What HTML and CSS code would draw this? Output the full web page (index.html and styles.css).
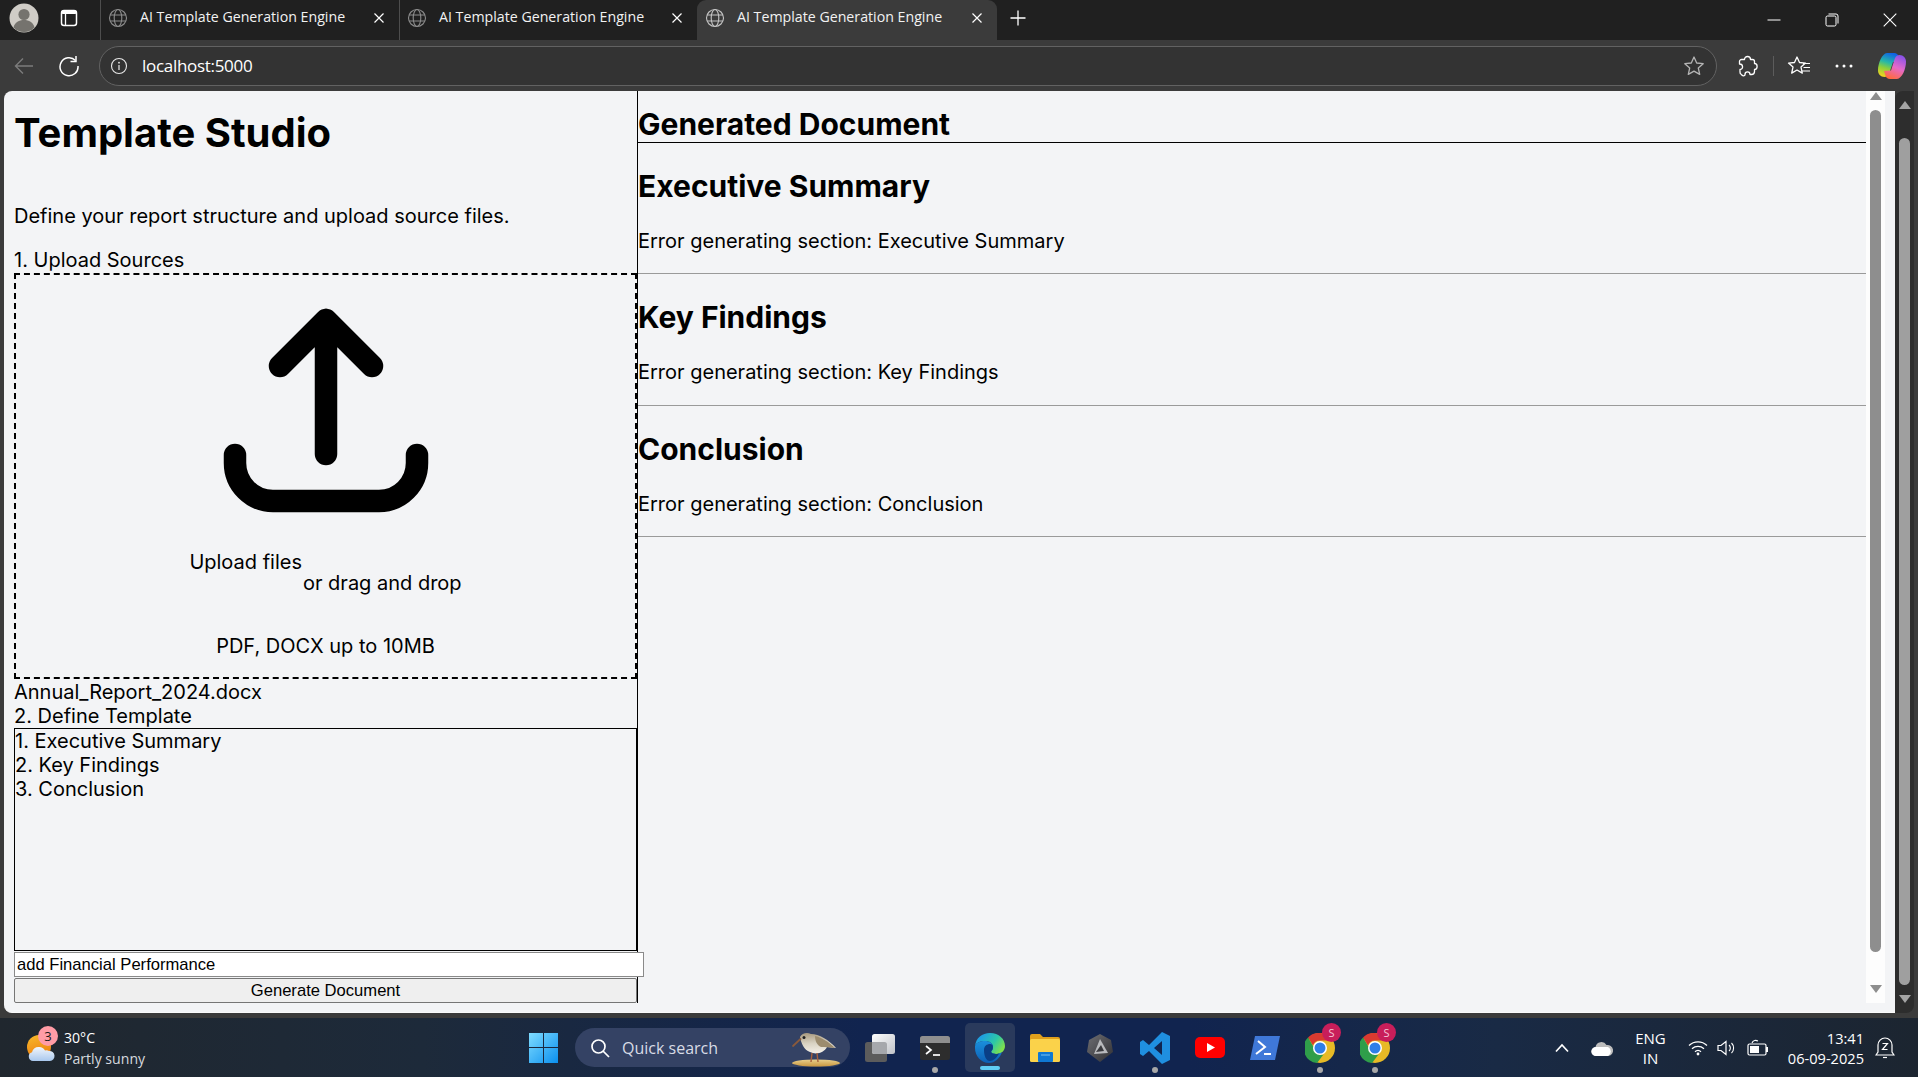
FILE: index.html
```html
<!DOCTYPE html>
<html lang="en">
<head>
<meta charset="utf-8">
<title>AI Template Generation Engine</title>
<link rel="stylesheet" href="styles.css">
</head>
<body>
<div class="screen">
  <header class="tabstrip">
    <span class="slot slot-first"><svg width="32" height="32" viewBox="0 0 32 32"><circle cx="16" cy="16" r="14.5" fill="#cfccc6"/><circle cx="16" cy="12.5" r="5.6" fill="#75736e"/><path d="M5.5 25.5c1.5-5.5 5.5-7.5 10.5-7.5s9 2 10.500 7.500A14.500 14.500 0 0 1 5.500 25.500z" fill="#75736e"/></svg></span>
    <span class="slot slot-second"><svg width="20" height="20" viewBox="0 0 20 20"><rect x="2.500" y="2.500" width="15" height="15" rx="2.500" fill="none" stroke="#fff" stroke-width="1.500"/><rect x="2.500" y="2.500" width="15" height="3.500" rx="1.500" fill="#fff"/><path d="M6.500 6v11" stroke="#fff" stroke-width="1.300"/></svg></span>
    <div class="tab">
      <svg class="globe" width="20" height="20" viewBox="0 0 20 20"><g fill="none" stroke="#8c8c8c" stroke-width="1.100"><circle cx="10" cy="10" r="8.500"/><ellipse cx="10" cy="10" rx="3.800" ry="8.500"/><path d="M2 7h16M2 13h16"/></g></svg>
      <span class="tab-title">AI Template Generation Engine</span>
      <svg class="tab-x" width="12" height="12" viewBox="0 0 12 12"><path d="M1.500 1.500l9 9m0-9l-9 9" stroke="#fff" stroke-width="1.200"/></svg>
    </div>
    <div class="tab tab-mid">
      <svg class="globe" width="20" height="20" viewBox="0 0 20 20"><g fill="none" stroke="#8c8c8c" stroke-width="1.100"><circle cx="10" cy="10" r="8.500"/><ellipse cx="10" cy="10" rx="3.800" ry="8.500"/><path d="M2 7h16M2 13h16"/></g></svg>
      <span class="tab-title">AI Template Generation Engine</span>
      <svg class="tab-x" width="12" height="12" viewBox="0 0 12 12"><path d="M1.500 1.500l9 9m0-9l-9 9" stroke="#fff" stroke-width="1.200"/></svg>
    </div>
    <div class="tab tab-active">
      <svg class="globe" width="20" height="20" viewBox="0 0 20 20"><g fill="none" stroke="#c4c4c4" stroke-width="1.100"><circle cx="10" cy="10" r="8.500"/><ellipse cx="10" cy="10" rx="3.800" ry="8.500"/><path d="M2 7h16M2 13h16"/></g></svg>
      <span class="tab-title">AI Template Generation Engine</span>
      <svg class="tab-x" width="12" height="12" viewBox="0 0 12 12"><path d="M1.500 1.500l9 9m0-9l-9 9" stroke="#fff" stroke-width="1.200"/></svg>
    </div>
    <span class="slot slot-plus"><svg width="18" height="18" viewBox="0 0 18 18"><path d="M9 1.500v15M1.500 9h15" stroke="#fff" stroke-width="1.300"/></svg></span>
    <div class="winctl">
      <span class="winbtn"><svg width="14" height="14" viewBox="0 0 14 14"><path d="M0.500 7h13" stroke="#fff" stroke-width="1"/></svg></span>
      <span class="winbtn"><svg width="14" height="14" viewBox="0 0 14 14"><rect x="1" y="3" width="10" height="10" rx="1.500" fill="none" stroke="#fff"/><path d="M3.500 1h7.500a2 2 0 0 1 2 2v7.500" fill="none" stroke="#fff"/></svg></span>
      <span class="winbtn winbtn-last"><svg width="14" height="14" viewBox="0 0 14 14"><path d="M0.700 0.700l12.600 12.600m0-12.600L0.700 13.300" stroke="#fff" stroke-width="1.100"/></svg></span>
    </div>
  </header>

  <nav class="toolbar">
    <span class="slot slot-first"><svg width="22" height="22" viewBox="0 0 22 22"><path d="M20 11H2.500M10 3.500L2.500 11l7.500 7.500" fill="none" stroke="#7c7c7c" stroke-width="1.400"/></svg></span>
    <span class="slot slot-second"><svg width="22" height="22" viewBox="0 0 22 22"><path d="M17.500 5.500A9 9 0 1 0 20 11" fill="none" stroke="#fff" stroke-width="1.500"/><path d="M18 1v5.500h-5.500" fill="none" stroke="#fff" stroke-width="1.500"/></svg></span>
    <div class="address">
      <svg class="addr-info" width="18" height="18" viewBox="0 0 18 18"><circle cx="9" cy="9" r="7.500" fill="none" stroke="#e8e8e8" stroke-width="1.100"/><path d="M9 8v5" stroke="#e8e8e8" stroke-width="1.200"/><circle cx="9" cy="5.700" r="0.900" fill="#e8e8e8"/></svg>
      <span class="addr-url">localhost:5000</span>
      <svg class="addr-star" width="22" height="22" viewBox="0 0 22 22"><path d="M11 2l2.700 6 6.500 0.700-4.900 4.300 1.400 6.400L11 16.100l-5.700 3.300 1.400-6.400-4.900-4.300L8.300 8z" fill="none" stroke="#b4b4b4" stroke-width="1.300" stroke-linejoin="round"/></svg>
    </div>
    <span class="slot slot-ext"><svg width="20" height="22" viewBox="0 0 20 22"><path d="M6.500 4.500C6.500 0.500 12.500 0.500 12.500 4.500H14.500A2 2 0 0 1 16.500 6.500V8.500C20 8.500 20 14.500 16.500 14.500V16.500A3 3 0 0 1 13.500 19.500H12C12 16 7 16 7 19.500 7 21.500 4 21 3.500 19.500A2.500 2.500 0 0 1 2 17V14.500C5.500 14.500 5.500 9 1.500 9V6.500A2 2 0 0 1 3.500 4.500z" fill="none" stroke="#fff" stroke-width="1.300" stroke-linejoin="round"/></svg></span>
    <span class="tool-sep"></span>
    <span class="slot slot-fav"><svg width="24" height="22" viewBox="0 0 24 22"><path d="M10 2l2.500 5.500 6 0.600-4.500 4 1.300 6L10 15l-5.300 3.100 1.300-6-4.500-4 6-0.600z" fill="none" stroke="#fff" stroke-width="1.300" stroke-linejoin="round"/><path d="M16 8.500h7M16.500 12.500h6.500M15 16h8" stroke="#fff" stroke-width="1.200"/></svg></span>
    <span class="slot slot-more"><svg width="18" height="4" viewBox="0 0 18 4"><circle cx="2" cy="2" r="1.500" fill="#fff"/><circle cx="9" cy="2" r="1.500" fill="#fff"/><circle cx="16" cy="2" r="1.500" fill="#fff"/></svg></span>
    <span class="slot slot-copilot"><svg width="28" height="26" viewBox="0 0 28 26"><defs><linearGradient id="cp1" x1="0.300" y1="1" x2="0.600" y2="0"><stop offset="0" stop-color="#f2d31f"/><stop offset="0.350" stop-color="#8ccf3c"/><stop offset="0.600" stop-color="#26b8a8"/><stop offset="1" stop-color="#0f62e6"/></linearGradient><linearGradient id="cp2" x1="0.700" y1="0" x2="0.300" y2="1"><stop offset="0" stop-color="#8a52e8"/><stop offset="0.500" stop-color="#e56ac8"/><stop offset="1" stop-color="#ff6a3a"/></linearGradient></defs><path d="M9 0h7c2.500 0 4 1.500 4.500 3.500L22 8.500 15 9 11 21c-1 2-2.500 3-4.500 3C2.500 24 0 21 0 17.500 0 10 4 0.500 9 0z" fill="url(#cp1)"/><path d="M19 26h-7c-2.500 0-4-1.500-4.500-3.500L6 18l7-.5L17 5c1-2 2.500-3 4.500-3C25.500 2 28 5 28 8.500 28 16 24 25.500 19 26z" fill="url(#cp2)"/></svg></span>
  </nav>

  <div class="viewport">
    <main class="page">
      <div class="app">
        <aside class="left">
          <h1 class="title">Template Studio</h1>
          <p class="intro">Define your report structure and upload source files.</p>
          <label class="field-label">1. Upload Sources</label>
          <div class="dropzone">
            <svg class="upload-icon" width="206" height="206" viewBox="0 0 206 206"><path d="M103 147V13M57 59l46-46 46 46M12 148v8a38 38 0 0 0 38 38h106a38 38 0 0 0 38-38v-8" fill="none" stroke="#000" stroke-width="22.500" stroke-linecap="round" stroke-linejoin="round"/></svg>
            <div class="upload-row">
              <span class="upload-link">Upload files</span>
              <span class="upload-or">or drag and drop</span>
            </div>
            <p class="upload-hint">PDF, DOCX up to 10MB</p>
          </div>
          <div class="file-name">Annual_Report_2024.docx</div>
          <label class="field-label">2. Define Template</label>
          <textarea class="template" spellcheck="false">1. Executive Summary
2. Key Findings
3. Conclusion</textarea>
          <input class="add-input" type="text" value="add Financial Performance">
          <button class="generate" type="button">Generate Document</button>
        </aside>
        <section class="right">
          <h2 class="doc-title">Generated Document</h2>
          <article class="doc-section">
            <h3 class="sec-title">Executive Summary</h3>
            <p class="sec-body">Error generating section: Executive Summary</p>
          </article>
          <article class="doc-section">
            <h3 class="sec-title">Key Findings</h3>
            <p class="sec-body">Error generating section: Key Findings</p>
          </article>
          <article class="doc-section">
            <h3 class="sec-title">Conclusion</h3>
            <p class="sec-body">Error generating section: Conclusion</p>
          </article>
        </section>
        <div class="inner-scroll">
          <span class="arrow-up inner-up"></span>
          <span class="inner-thumb"></span>
          <span class="arrow-down inner-down"></span>
        </div>
      </div>
    </main>
    <div class="outer-scroll">
      <span class="arrow-up outer-up"></span>
      <span class="outer-thumb"></span>
      <span class="arrow-down outer-down"></span>
    </div>
  </div>

  <footer class="taskbar">
    <div class="tb-left">
      <span class="weather-icon">
        <svg width="30" height="28" viewBox="0 0 30 28"><defs><linearGradient id="sun" x1="0" y1="0" x2="0.300" y2="1"><stop offset="0" stop-color="#f7bb2a"/><stop offset="1" stop-color="#ee7f12"/></linearGradient><linearGradient id="cloud" x1="0" y1="0" x2="0" y2="1"><stop offset="0" stop-color="#f2f6fb"/><stop offset="1" stop-color="#a9c8ee"/></linearGradient></defs><circle cx="13" cy="13" r="12" fill="url(#sun)"/><path d="M7 27a4.500 4.500 0 0 1-1-8.800A6.500 6.500 0 0 1 13 13a6.500 6.500 0 0 1 6 3.500 5 5 0 0 1 4 .5 5 5 0 0 1 1 10z" fill="url(#cloud)"/></svg>
        <span class="weather-badge">3</span>
      </span>
      <div class="weather-text">
        <span class="weather-temp">30°C</span>
        <span class="weather-desc">Partly sunny</span>
      </div>
    </div>
    <span class="start"><svg width="29" height="30" viewBox="0 0 29 30"><defs><linearGradient id="win" x1="0" y1="0" x2="1" y2="1"><stop offset="0" stop-color="#7fdcff"/><stop offset="1" stop-color="#0a8fef"/></linearGradient></defs><path d="M0 0h14v14H0zM15 0h14v14H15zM0 15h14v15H0zM15 15h14v15H15z" fill="url(#win)"/></svg></span>
    <div class="search">
      <svg class="search-glass" width="20" height="20" viewBox="0 0 20 20"><circle cx="8.500" cy="8.500" r="6.500" fill="none" stroke="#fff" stroke-width="1.700"/><path d="M13 13l6 6" stroke="#fff" stroke-width="1.700"/></svg>
      <span class="search-text">Quick search</span>
      <svg class="search-bird" width="50" height="38" viewBox="0 0 50 38"><defs><linearGradient id="sand" x1="0" y1="0" x2="0" y2="1"><stop offset="0" stop-color="#e8cf8c"/><stop offset="1" stop-color="#c9963f"/></linearGradient><linearGradient id="bbody" x1="0.300" y1="0" x2="0.400" y2="1"><stop offset="0" stop-color="#a89a80"/><stop offset="0.500" stop-color="#d8d2c2"/><stop offset="1" stop-color="#f4f0e8"/></linearGradient></defs><ellipse cx="26" cy="34" rx="24" ry="3.500" fill="url(#sand)"/><path d="M10 8c2-4 7-5 11-3 8 0 18 6 25 14-3 0-6-1-9-1-3 6-11 8-17 5C14 21 11 14 10 8z" fill="url(#bbody)"/><path d="M25 7c6 1 14 6 20 12-5-1-10-1-14-1-4-2-6-6-6-11z" fill="#9c8c6e"/><circle cx="14" cy="8.500" r="1.500" fill="#1e1e1e"/><path d="M10.500 10L3 17" stroke="#8a5a3c" stroke-width="1.800" stroke-linecap="round"/><path d="M22 24l-1 9M27 24l1 9" stroke="#a8603c" stroke-width="1.400"/></svg>
    </div>
    <span class="taskview"><svg width="30" height="28" viewBox="0 0 30 28"><defs><linearGradient id="tv" x1="0" y1="0" x2="1" y2="1"><stop offset="0" stop-color="#ffffff"/><stop offset="1" stop-color="#bfc2c8"/></linearGradient></defs><rect x="0" y="8" width="22" height="20" rx="2.500" fill="#5c5c5c"/><rect x="7" y="0" width="23" height="20" rx="2.500" fill="url(#tv)"/><path d="M7 8h12.500A2.500 2.500 0 0 1 22 10.500V20H9.500A2.500 2.500 0 0 1 7 17.500z" fill="#a6a8ac"/></svg></span>
    <div class="apps">
      <span class="app-slot app-dot"><svg width="30" height="24" viewBox="0 0 30 24"><rect width="30" height="24" rx="2.500" fill="#2d2d2d"/><path d="M0 2.500A2.500 2.500 0 0 1 2.500 0h25A2.500 2.500 0 0 1 30 2.500V7H0z" fill="#8f8f8f"/><path d="M6 10l5 4-5 4" fill="none" stroke="#fff" stroke-width="1.700"/><path d="M13 19h7" stroke="#fff" stroke-width="1.700"/></svg></span>
      <span class="app-slot app-active"><svg width="30" height="30" viewBox="0 0 30 30"><defs><linearGradient id="edge1" x1="0.200" y1="0.200" x2="1" y2="0.600"><stop offset="0" stop-color="#1f9fe0"/><stop offset="0.550" stop-color="#2cc7a8"/><stop offset="1" stop-color="#7fe04c"/></linearGradient><linearGradient id="edge2" x1="0" y1="0" x2="0" y2="1"><stop offset="0" stop-color="#1a8fdc"/><stop offset="1" stop-color="#0d5fb4"/></linearGradient></defs><path d="M15 0C24 0 30 6 30 13c0 5-4 8-9 8-2.500 0-4.500-.8-5-2 0-1 2-2 2-5 0-4-4-6-8-6C5 8 1 10 0 13 1 5 7 0 15 0z" fill="url(#edge1)"/><path d="M0 13c1-3 5-5 10-5 4 0 8 2 8 6 0 3-2 4-2 5 .5 1.200 2.500 2 5 2 2 0 4-.5 6-2-2 6-7 11-13 11C6 30 0 23 0 15z" fill="url(#edge2)"/><path d="M9 17c0-4 3-6 6-6 2 0 3 1 3 3 0 3-2 4-2 5 .5 1.200 2.500 2 5 2 1 0 2-.1 3-.5C22 25 18 28 15 28c-4 0-6-5-6-11z" fill="#0a3f86"/></svg></span>
      <span class="app-slot"><svg width="30" height="28" viewBox="0 0 30 28"><path d="M0 2a2 2 0 0 1 2-2h8l3 3h15a2 2 0 0 1 2 2v3H0z" fill="#e0a01c"/><rect y="5" width="30" height="23" rx="1.500" fill="#fbd24a"/><rect x="8" y="18" width="15" height="10" rx="1" fill="#0f78d4"/><path d="M11 21h9" stroke="#7cc4f2" stroke-width="1"/></svg></span>
      <span class="app-slot"><svg width="26" height="28" viewBox="0 0 26 28"><defs><linearGradient id="hex" x1="0" y1="0" x2="1" y2="1"><stop offset="0" stop-color="#6f6f73"/><stop offset="1" stop-color="#2f2f33"/></linearGradient></defs><path d="M13 0l11 6 2 12-13 10L0 18 2 6z" fill="url(#hex)"/><path d="M13 5l8 14-14 1z" fill="#b9babd"/><path d="M14 11l3 6-8 1z" fill="#3a3a3e"/></svg></span>
      <span class="app-slot app-dot"><svg width="30" height="32" viewBox="0 0 30 32"><path d="M22 0l8 4v24l-8 4-13-13-6 5-3-2V10l3-2 6 5zM22 9l-8 7 8 7z" fill="#1f8fe0"/></svg></span>
      <span class="app-slot"><svg width="30" height="21" viewBox="0 0 30 21"><rect width="30" height="21" rx="5" fill="#ff0000"/><path d="M12 6l8 4.500-8 4.500z" fill="#fff"/></svg></span>
      <span class="app-slot"><svg width="30" height="24" viewBox="0 0 30 24"><path d="M5 0h25l-5 24H0z" fill="#3f78d8"/><path d="M8 5l7 6-9 7" fill="none" stroke="#fff" stroke-width="2"/><path d="M14 18h7" stroke="#fff" stroke-width="2"/></svg></span>
      <span class="app-slot app-dot"><svg width="30" height="30" viewBox="0 0 30 30"><circle cx="15" cy="15" r="15" fill="#e7ba26"/><path d="M15 0a15 15 0 0 1 13 7.500H15a7.500 7.500 0 0 0-7 5L3 4.500A15 15 0 0 1 15 0z" fill="#d93a30"/><path d="M3 4.500l6.500 11a7.500 7.500 0 0 0 9 6L12 30A15 15 0 0 1 3 4.500z" fill="#2f9e4a"/><circle cx="15" cy="15" r="7" fill="#fff"/><circle cx="15" cy="15" r="5.500" fill="#2f7fe8"/></svg><span class="app-badge">S</span></span>
      <span class="app-slot app-dot"><svg width="30" height="30" viewBox="0 0 30 30"><circle cx="15" cy="15" r="15" fill="#e7ba26"/><path d="M15 0a15 15 0 0 1 13 7.500H15a7.500 7.500 0 0 0-7 5L3 4.500A15 15 0 0 1 15 0z" fill="#d93a30"/><path d="M3 4.500l6.500 11a7.500 7.500 0 0 0 9 6L12 30A15 15 0 0 1 3 4.500z" fill="#2f9e4a"/><circle cx="15" cy="15" r="7" fill="#fff"/><circle cx="15" cy="15" r="5.500" fill="#2f7fe8"/></svg><span class="app-badge">S</span></span>
    </div>
    <div class="tray">
      <span class="tray-chevron"><svg width="16" height="10" viewBox="0 0 16 10"><path d="M2 8.500l6-6.500 6 6.500" fill="none" stroke="#fff" stroke-width="1.700"/></svg></span>
      <span class="tray-cloud"><svg width="22" height="16" viewBox="0 0 22 16"><path d="M5 16a4.500 4.500 0 0 1-.5-9 6 6 0 0 1 11-2 5.500 5.500 0 0 1 2 11z" fill="#bdbdbd"/><path d="M5 16a4.500 4.500 0 0 1 0-9h12a5 5 0 0 1 0 9z" fill="#fff"/></svg></span>
      <div class="tray-lang"><span>ENG</span><span>IN</span></div>
      <span class="tray-wifi"><svg width="20" height="16" viewBox="0 0 20 16"><g fill="none" stroke="#fff" stroke-width="1.300"><path d="M1 5.500a13 13 0 0 1 18 0"/><path d="M4 8.700a9 9 0 0 1 12 0"/><path d="M7 11.700a4.500 4.500 0 0 1 6 0"/></g><circle cx="10" cy="14" r="1.400" fill="#fff"/></svg></span>
      <span class="tray-vol"><svg width="20" height="16" viewBox="0 0 20 16"><path d="M1 5.500h3L9 1.500v13l-5-4H1z" fill="none" stroke="#fff" stroke-width="1.200"/><path d="M12 5a4 4 0 0 1 0 6M14.500 3a7 7 0 0 1 0 10" fill="none" stroke="#fff" stroke-width="1.100"/></svg></span>
      <span class="tray-bat"><svg width="22" height="18" viewBox="0 0 22 18"><rect x="1" y="5" width="18" height="11" rx="1.500" fill="none" stroke="#fff" stroke-width="1.200"/><rect x="3" y="7" width="9" height="7" fill="#fff"/><path d="M19 8v5h2V8z" fill="#fff"/><path d="M5 4c1-3 4-3 6-2" fill="none" stroke="#fff" stroke-width="1.100"/></svg></span>
      <div class="tray-clock"><span>13:41</span><span>06-09-2025</span></div>
      <span class="tray-bell"><svg width="20" height="24" viewBox="0 0 20 24"><path d="M3 16V9a7 7 0 0 1 14 0v7l2 3H1z" fill="none" stroke="#fff" stroke-width="1.200"/><path d="M8 21.500h4" stroke="#fff" stroke-width="1.200"/><path d="M7.500 7.500h5l-5 6h5" fill="none" stroke="#fff" stroke-width="1.200"/></svg></span>
    </div>
  </footer>
</div>
</body>
</html>
```
FILE: styles.css
```css
* { box-sizing: border-box; }
html, body { margin: 0; padding: 0; }
body { width: 1918px; height: 1077px; overflow: hidden; background: #3b3b3b; font-family: "Inter", "Liberation Sans", sans-serif; color: #000; }
svg { display: block; flex: none; }
.screen { display: flex; flex-direction: column; width: 1918px; height: 1077px; }

.slot { display: flex; align-items: center; justify-content: center; width: 32px; height: 32px; flex: none; }
.slot-first { margin-left: 8px; }
.slot-second { margin-left: 13px; }

.tabstrip { display: flex; align-items: center; height: 40px; flex: none; background: #202020; font-family: "Open Sans", sans-serif; color: #fff; }
.tabstrip > .slot { margin-top: -4px; }
.tab { display: flex; align-items: center; width: 299px; height: 40px; padding: 0 0 4px 8px; margin-left: 0; flex: none; position: relative; }
.slot-second + .tab { margin-left: 15px; border-left: 1px solid #4d4d4d; padding-left: 7px; }
.tab-mid { width: 298px; border-left: 1px solid #4d4d4d; padding-left: 7px; }
.tab-active { width: 300px; background: #3b3b3b; border-radius: 9px 9px 0 0; }
.globe { margin-right: 12px; }
.tab-title { flex: 1; font-size: 14.2px; line-height: 18px; margin-top: -2px; white-space: nowrap; color: #f2f2f2; }
.tab-x { margin-right: 14px; }
.slot-plus { margin-left: 5px; }
.winctl { display: flex; margin-left: auto; }
.winbtn { display: flex; align-items: center; justify-content: center; width: 58px; height: 38px; }
.winbtn-last { width: 57px; }

.toolbar { display: flex; align-items: center; height: 51px; flex: none; background: #3b3b3b; font-family: "Open Sans", sans-serif; }
.address { display: flex; align-items: center; width: 1618px; height: 40px; margin-left: 14px; padding: 0 11px 0 10px; border: 1px solid #626262; border-radius: 20px; background: #333333; }
.addr-info { flex: none; }
.addr-url { flex: 1; margin-left: 14px; font-size: 17px; color: #fff; letter-spacing: -0.3px; }
.slot-ext { margin-left: 15px; }
.tool-sep { width: 1px; height: 20px; margin-left: 9px; background: #5c5c5c; flex: none; }
.slot-fav { margin-left: 9px; }
.slot-more { margin-left: 13px; }
.slot-copilot { margin-left: 16px; }

.viewport { display: flex; flex: none; height: 922px; padding-left: 4px; }
.page { width: 1891px; height: 922px; background: #f3f4f6; border-radius: 8px 0 0 8px; overflow: hidden; border-bottom: 1px solid #fafafa; }
.app { display: flex; height: 912px; }

.left { display: flex; flex-direction: column; align-items: flex-start; width: 634px; height: 912px; padding-left: 10px; border-right: 1px solid #000; flex: none; font-size: 20px; line-height: 24px; }
.title { margin: 20px 0 0; font-size: 40px; line-height: 44px; font-weight: 700; }
.intro { margin: 47px 0 0; font-size: 20px; line-height: 28px; }
.field-label { display: block; font-size: 20px; line-height: 24px; }
.intro + .field-label { margin-top: 18px; }
.dropzone { display: flex; flex-direction: column; align-items: center; width: 623px; height: 406px; margin-top: 1px; border: 2px dashed #000; padding-top: 32px; }
.upload-row { display: flex; justify-content: center; margin-top: 37px; }
.upload-link { display: block; }
.upload-or { display: block; margin-top: 21px; margin-left: 1px; }
.upload-hint { margin: 39px 0 0; }
.file-name { margin-top: 1px; }
.template { display: block; width: 623px; height: 223px; margin: 0; padding: 0; border: 1px solid #000; background: #f3f4f6; color: #000; font-family: "Inter", sans-serif; font-size: 20px; line-height: 24px; resize: none; overflow: hidden; border-radius: 0; outline: none; }
.add-input { display: block; width: 630px; height: 25px; margin-top: 1px; padding: 0 2px; border: 1px solid #8a8a8a; background: #fff; color: #000; font-family: "Liberation Sans", Arial, sans-serif; font-size: 16.6px; outline: none; flex: none; position: relative; z-index: 1; }
.generate { display: block; width: 623px; height: 25px; margin-top: 1px; padding: 0; border: 1px solid #767676; border-radius: 2px; background: #efefef; color: #000; font-family: "Liberation Sans", Arial, sans-serif; font-size: 16.6px; flex: none; }

.right { flex: 1; min-width: 0; }
.doc-title { margin: 0; padding-top: 14px; height: 52px; border-bottom: 1px solid #000; font-size: 30px; line-height: 38px; font-weight: 700; }
.doc-section { height: 131.300px; border-bottom: 1px solid #9a9a9a; }
.sec-title { margin: 0; padding-top: 23px; font-size: 30px; line-height: 40px; font-weight: 700; }
.sec-body { margin: 21px 0 0; font-size: 20px; line-height: 28px; }

.inner-scroll { display: flex; flex-direction: column; align-items: center; width: 19px; height: 912px; margin-right: 10px; flex: none; background: #fdfdfd; }
.arrow-up, .arrow-down { display: block; width: 0; height: 0; border-left: 6px solid transparent; border-right: 6px solid transparent; flex: none; }
.arrow-up { border-bottom: 8px solid #8e8e8e; }
.arrow-down { border-top: 8px solid #8e8e8e; }
.inner-up { margin-top: 1px; }
.inner-thumb { display: block; width: 11px; height: 842px; margin-top: 10px; border-radius: 6px; background: #8e8e8e; flex: none; }
.inner-down { margin-top: 33px; }

.outer-scroll { display: flex; flex-direction: column; align-items: center; width: 19px; height: 922px; background: #2d2d2d; border-radius: 8px 0 8px 0; flex: none; }
.outer-up { margin-top: 10px; border-bottom-color: #a4a4a4; }
.outer-thumb { display: block; width: 11px; height: 847px; margin-top: 29px; border-radius: 6px; background: #9f9f9f; flex: none; }
.outer-down { margin-top: 10px; border-top-color: #a4a4a4; }

.taskbar { display: flex; align-items: center; height: 59px; margin-top: 5px; flex: none; padding-top: 0; background: linear-gradient(90deg, #20272e 0%, #1d2a3a 22%, #11244f 45%, #11244f 62%, #192a45 78%, #1c2530 100%); color: #fff; font-family: "Open Sans", sans-serif; }
.tb-left { display: flex; align-items: center; width: 529px; padding-left: 26px; flex: none; }
.weather-icon { position: relative; display: block; width: 30px; height: 28px; flex: none; }
.weather-badge { position: absolute; left: 12px; top: -8px; width: 20px; height: 20px; border-radius: 50%; background: #ff9ca6; color: #1a1a1a; font-size: 13px; line-height: 20px; text-align: center; }
.weather-text { display: flex; flex-direction: column; margin-left: 8px; }
.weather-temp { font-size: 14.100px; line-height: 21px; }
.weather-desc { font-size: 14.100px; line-height: 21px; color: #d6d9de; }
.start { display: block; flex: none; }
.search { display: flex; align-items: center; width: 275px; height: 39px; margin-left: 17px; padding: 0 10px 0 15px; border-radius: 20px; background: #344264; flex: none; }
.search-text { flex: 1; margin-left: 12px; font-size: 16px; color: #d8dce6; }
.search-glass { flex: none; }
.search-bird { flex: none; }
.taskview { display: block; margin-left: 15px; flex: none; }
.apps { display: flex; margin-left: 12px; flex: none; }
.app-slot { display: flex; align-items: center; justify-content: center; position: relative; width: 55px; height: 49px; flex: none; }
.app-active { background: #2a3a5c; border-radius: 5px; width: 50px; margin: 0 2.500px; }
.app-dot::after { content: ""; position: absolute; left: 50%; bottom: -1px; width: 6px; height: 6px; margin-left: -3px; border-radius: 50%; background: #a8a8a8; }
.app-active::after { content: ""; position: absolute; left: 50%; bottom: 2px; width: 20px; height: 4px; margin-left: -10px; border-radius: 2px; background: #5fcdf5; }
.app-badge { position: absolute; right: 6px; top: 0; width: 19px; height: 19px; border-radius: 50%; background: #c81e5a; color: #f5c6d6; font-size: 11px; line-height: 19px; text-align: center; }
.tray { display: flex; align-items: center; margin-left: auto; padding-right: 23px; flex: none; font-size: 15px; }
.tray-chevron { display: block; }
.tray-cloud { display: block; margin-left: 20.500px; }
.tray-lang { display: flex; flex-direction: column; align-items: center; width: 40px; margin-left: 18px; line-height: 20px; }
.tray-wifi { display: block; margin-left: 17px; }
.tray-vol { display: block; margin-left: 9px; }
.tray-bat { display: block; margin-left: 10px; }
.tray-clock { display: flex; flex-direction: column; align-items: flex-end; width: 90px; margin-left: 5.500px; font-size: 14.600px; line-height: 20px; }
.tray-bell { display: block; margin-left: 11px; }
```
